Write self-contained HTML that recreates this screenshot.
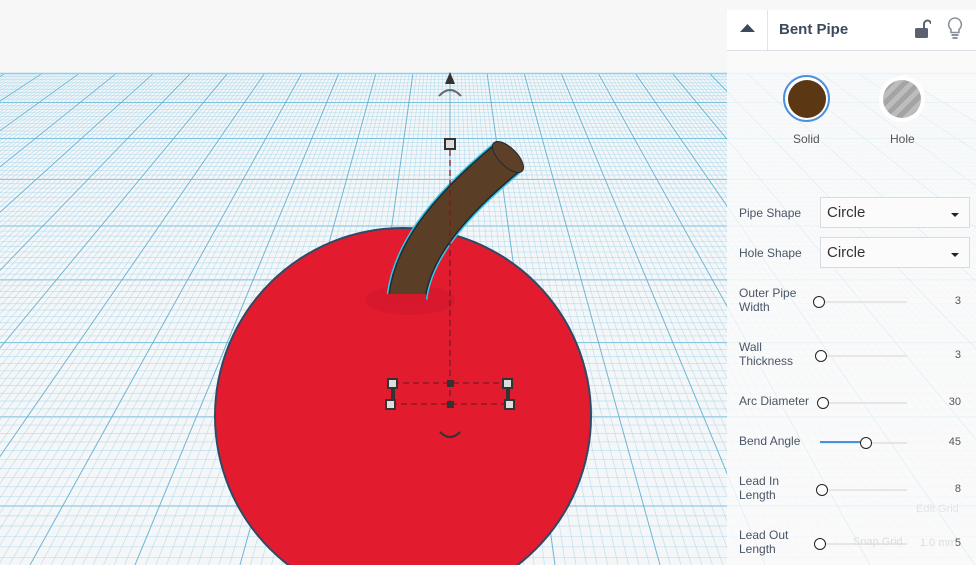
<!DOCTYPE html>
<html><head><meta charset="utf-8">
<style>
html,body{margin:0;width:976px;height:565px;overflow:hidden}
body{background:#f7f7f7;font-family:"Liberation Sans",sans-serif;position:relative}
#scene{position:absolute;left:0;top:0}
.panel{position:absolute;left:727px;top:10px;width:249px;height:555px;background:rgba(250,250,250,0.85);overflow:hidden}
.hdr{position:absolute;left:0;top:0;width:249px;height:40px;background:#fff;border-bottom:1px solid #dde0e6}
.hdr .sep{position:absolute;left:40px;top:0;width:1px;height:40px;background:#e2e4e8}
.title{position:absolute;left:52px;top:11px;font-size:15px;font-weight:bold;color:#3b4a5c}
.lbl{position:absolute;left:12px;font-size:12px;color:#4a5566;line-height:14px}
.sel{position:absolute;left:93px;width:150px;height:31px;border:1px solid #d8dbe0;background:#fbfbfb;box-sizing:border-box;font-size:15px;color:#333;padding:6px 0 0 6px}
.sel:after{content:"";position:absolute;right:10px;top:15px;border-left:4px solid transparent;border-right:4px solid transparent;border-top:4px solid #222}
.track{position:absolute;left:93px;width:87px;height:2px;background:#e6e6e6}
.knob{position:absolute;width:10px;height:10px;border:1.5px solid #222;border-radius:50%;background:#fff}
.val{position:absolute;right:15px;font-size:11px;color:#555}
</style></head><body>
<svg id="scene" width="976" height="565" viewBox="0 0 976 565">
<rect x="0" y="73" width="976" height="492" fill="#f4f6f7"/>
<g id="grid"></g>
<circle cx="403" cy="416" r="189" fill="#2f4a66"/>
<circle cx="403" cy="416" r="187" fill="#e31b2f"/>
<ellipse cx="410" cy="300" rx="45" ry="15" fill="#d0182b" opacity="0.6"/>
<path d="M407,297 C412,258 438,215 507,158" stroke="#38c6e8" stroke-width="41" fill="none"/>
<path d="M407,297 C412,258 438,215 507,158" stroke="#1e2a33" stroke-width="38" fill="none"/>
<path d="M407,297 C412,258 438,215 507,158" stroke="#5a3f26" stroke-width="35" fill="none"/>
<ellipse cx="508" cy="157" rx="9" ry="20" transform="rotate(-45 508 157)" fill="#5e4028" stroke="#1e2a33" stroke-width="1"/>
<rect x="386" y="294" width="40" height="8" fill="#d5192c"/>
<line x1="450" y1="150" x2="450" y2="405" stroke="#7a1a22" stroke-width="1.3" stroke-dasharray="6,4"/>
<line x1="393" y1="383" x2="507" y2="383" stroke="#7a1a22" stroke-width="1.3" stroke-dasharray="6,4"/>
<line x1="391" y1="404" x2="509" y2="404" stroke="#7a1a22" stroke-width="1.3" stroke-dasharray="6,4"/>
<rect x="391" y="383" width="4" height="21" fill="#333"/><rect x="506" y="383" width="4" height="21" fill="#333"/>
<g fill="#ddd" stroke="#333" stroke-width="2">
<rect x="445" y="139" width="10" height="10"/><rect x="388" y="379" width="9" height="9"/><rect x="503" y="379" width="9" height="9"/><rect x="386" y="400" width="9" height="9"/><rect x="505" y="400" width="9" height="9"/></g>
<rect x="447" y="380" width="7" height="7" fill="#333"/><rect x="447" y="401" width="7" height="7" fill="#333"/>
<path d="M440,432 Q450,442 460,432" stroke="#333" stroke-width="2" fill="none"/>
<path d="M445,84 L450,72 L455,84 Z" fill="#333"/>
<path d="M439,96 Q450,84 461,96" stroke="#666" stroke-width="2" fill="none"/>
</svg>
<script>
(function(){var g=document.getElementById('grid'),s='',vx=450,vy=-195,yh=-474,C=98000;
for(var z=90;z<200;z++){var y=yh+C/z;if(y>565||y<74)continue;var maj=z%10==0;s+='<line x1="0" x2="976" y1="'+y.toFixed(2)+'" y2="'+y.toFixed(2)+'" stroke="'+(maj?'#6fb9d8':'#9dd3ea')+'" stroke-width="'+(maj?1:0.7)+'" opacity="'+(maj?0.9:0.6)+'"/>';}
for(var i=-120;i<=120;i++){var xb=vx+i*10.5;var t=(73-vy)/(565-vy);var xt=vx+(xb-vx)*t;var maj=i%10==0;s+='<line x1="'+xb+'" y1="565" x2="'+xt.toFixed(2)+'" y2="73" stroke="'+(maj?'#5fb0d2':'#9dd3ea')+'" stroke-width="'+(maj?1:0.7)+'" opacity="'+(maj?0.9:0.6)+'"/>';}
s+='<line x1="0" x2="976" y1="73.5" y2="73.5" stroke="#8fd0ea" stroke-width="1.5"/>';
g.innerHTML=s;})();
</script>
<div class="panel">
 <div class="hdr"><div class="sep"></div>
  <svg style="position:absolute;left:13px;top:14px" width="15" height="9"><path d="M0,8 L7.5,0 L15,8Z" fill="#3b4a5c"/></svg>
  <div class="title">Bent Pipe</div>
  <svg style="position:absolute;left:188px;top:9px" width="16" height="20"><path d="M9,9 V5 a3.5,3.5 0 0 1 7,0" stroke="#5a6270" stroke-width="2" fill="none"/><rect x="0" y="9" width="13" height="10" rx="1.5" fill="#5a6270"/></svg>
  <svg style="position:absolute;left:220px;top:7px" width="16" height="24"><path d="M8,1 a6.5,6.5 0 0 0 -4,11.5 v3 h8 v-3 a6.5,6.5 0 0 0 -4,-11.5z" stroke="#8a9099" stroke-width="1.6" fill="none"/><rect x="4.5" y="17" width="7" height="2" fill="#8a9099"/><rect x="5.5" y="20" width="5" height="2" fill="#8a9099"/></svg>
 </div>
 <div style="position:absolute;left:56px;top:65px;width:43px;height:43px;border:2px solid #4a90e2;border-radius:50%;background:#fff"><div style="margin:2.5px;width:38px;height:38px;border-radius:50%;background:#5c3714"></div></div>
 <div style="position:absolute;left:66px;top:122px;font-size:12px;color:#555">Solid</div>
 <div style="position:absolute;left:152px;top:66px;width:46px;height:46px;border-radius:50%;background:#fff"><div style="margin:4px;width:38px;height:38px;border-radius:50%;background:repeating-linear-gradient(135deg,#bdbdbd 0 5px,#a4a4a4 5px 10px)"></div></div>
 <div style="position:absolute;left:163px;top:122px;font-size:12px;color:#555">Hole</div>
 <div class="lbl" style="top:196px">Pipe Shape</div><div class="sel" style="top:187px">Circle</div>
 <div class="lbl" style="top:236px">Hole Shape</div><div class="sel" style="top:227px">Circle</div>
 <div class="lbl" style="top:276px">Outer Pipe<br>Width</div><div class="track" style="top:291px"></div><div class="knob" style="left:86px;top:286px"></div><div class="val" style="top:285px">3</div>
 <div class="lbl" style="top:330px">Wall<br>Thickness</div><div class="track" style="top:345px"></div><div class="knob" style="left:88px;top:340px"></div><div class="val" style="top:339px">3</div>
 <div class="lbl" style="top:384px">Arc Diameter</div><div class="track" style="top:392px"></div><div class="knob" style="left:90px;top:387px"></div><div class="val" style="top:386px">30</div>
 <div class="lbl" style="top:424px">Bend Angle</div><div class="track" style="top:432px"></div><div style="position:absolute;left:93px;top:431px;width:40px;height:2px;background:#4a90e2"></div><div class="knob" style="left:133px;top:427px"></div><div class="val" style="top:426px">45</div>
 <div class="lbl" style="top:464px">Lead In<br>Length</div><div class="track" style="top:479px"></div><div class="knob" style="left:89px;top:474px"></div><div class="val" style="top:473px">8</div>
 <div style="position:absolute;left:189px;top:493px;font-size:11px;color:#e4e4e4">Edit Grid</div>
 <div class="lbl" style="top:518px">Lead Out<br>Length</div><div class="track" style="top:533px"></div><div class="knob" style="left:87px;top:528px"></div><div class="val" style="top:527px">5</div>
 <div style="position:absolute;left:126px;top:526px;font-size:11px;color:#ddd">Snap Grid</div>
 <div style="position:absolute;left:193px;top:527px;font-size:11px;color:#ddd">1.0 mm</div>
</div>
</body></html>
